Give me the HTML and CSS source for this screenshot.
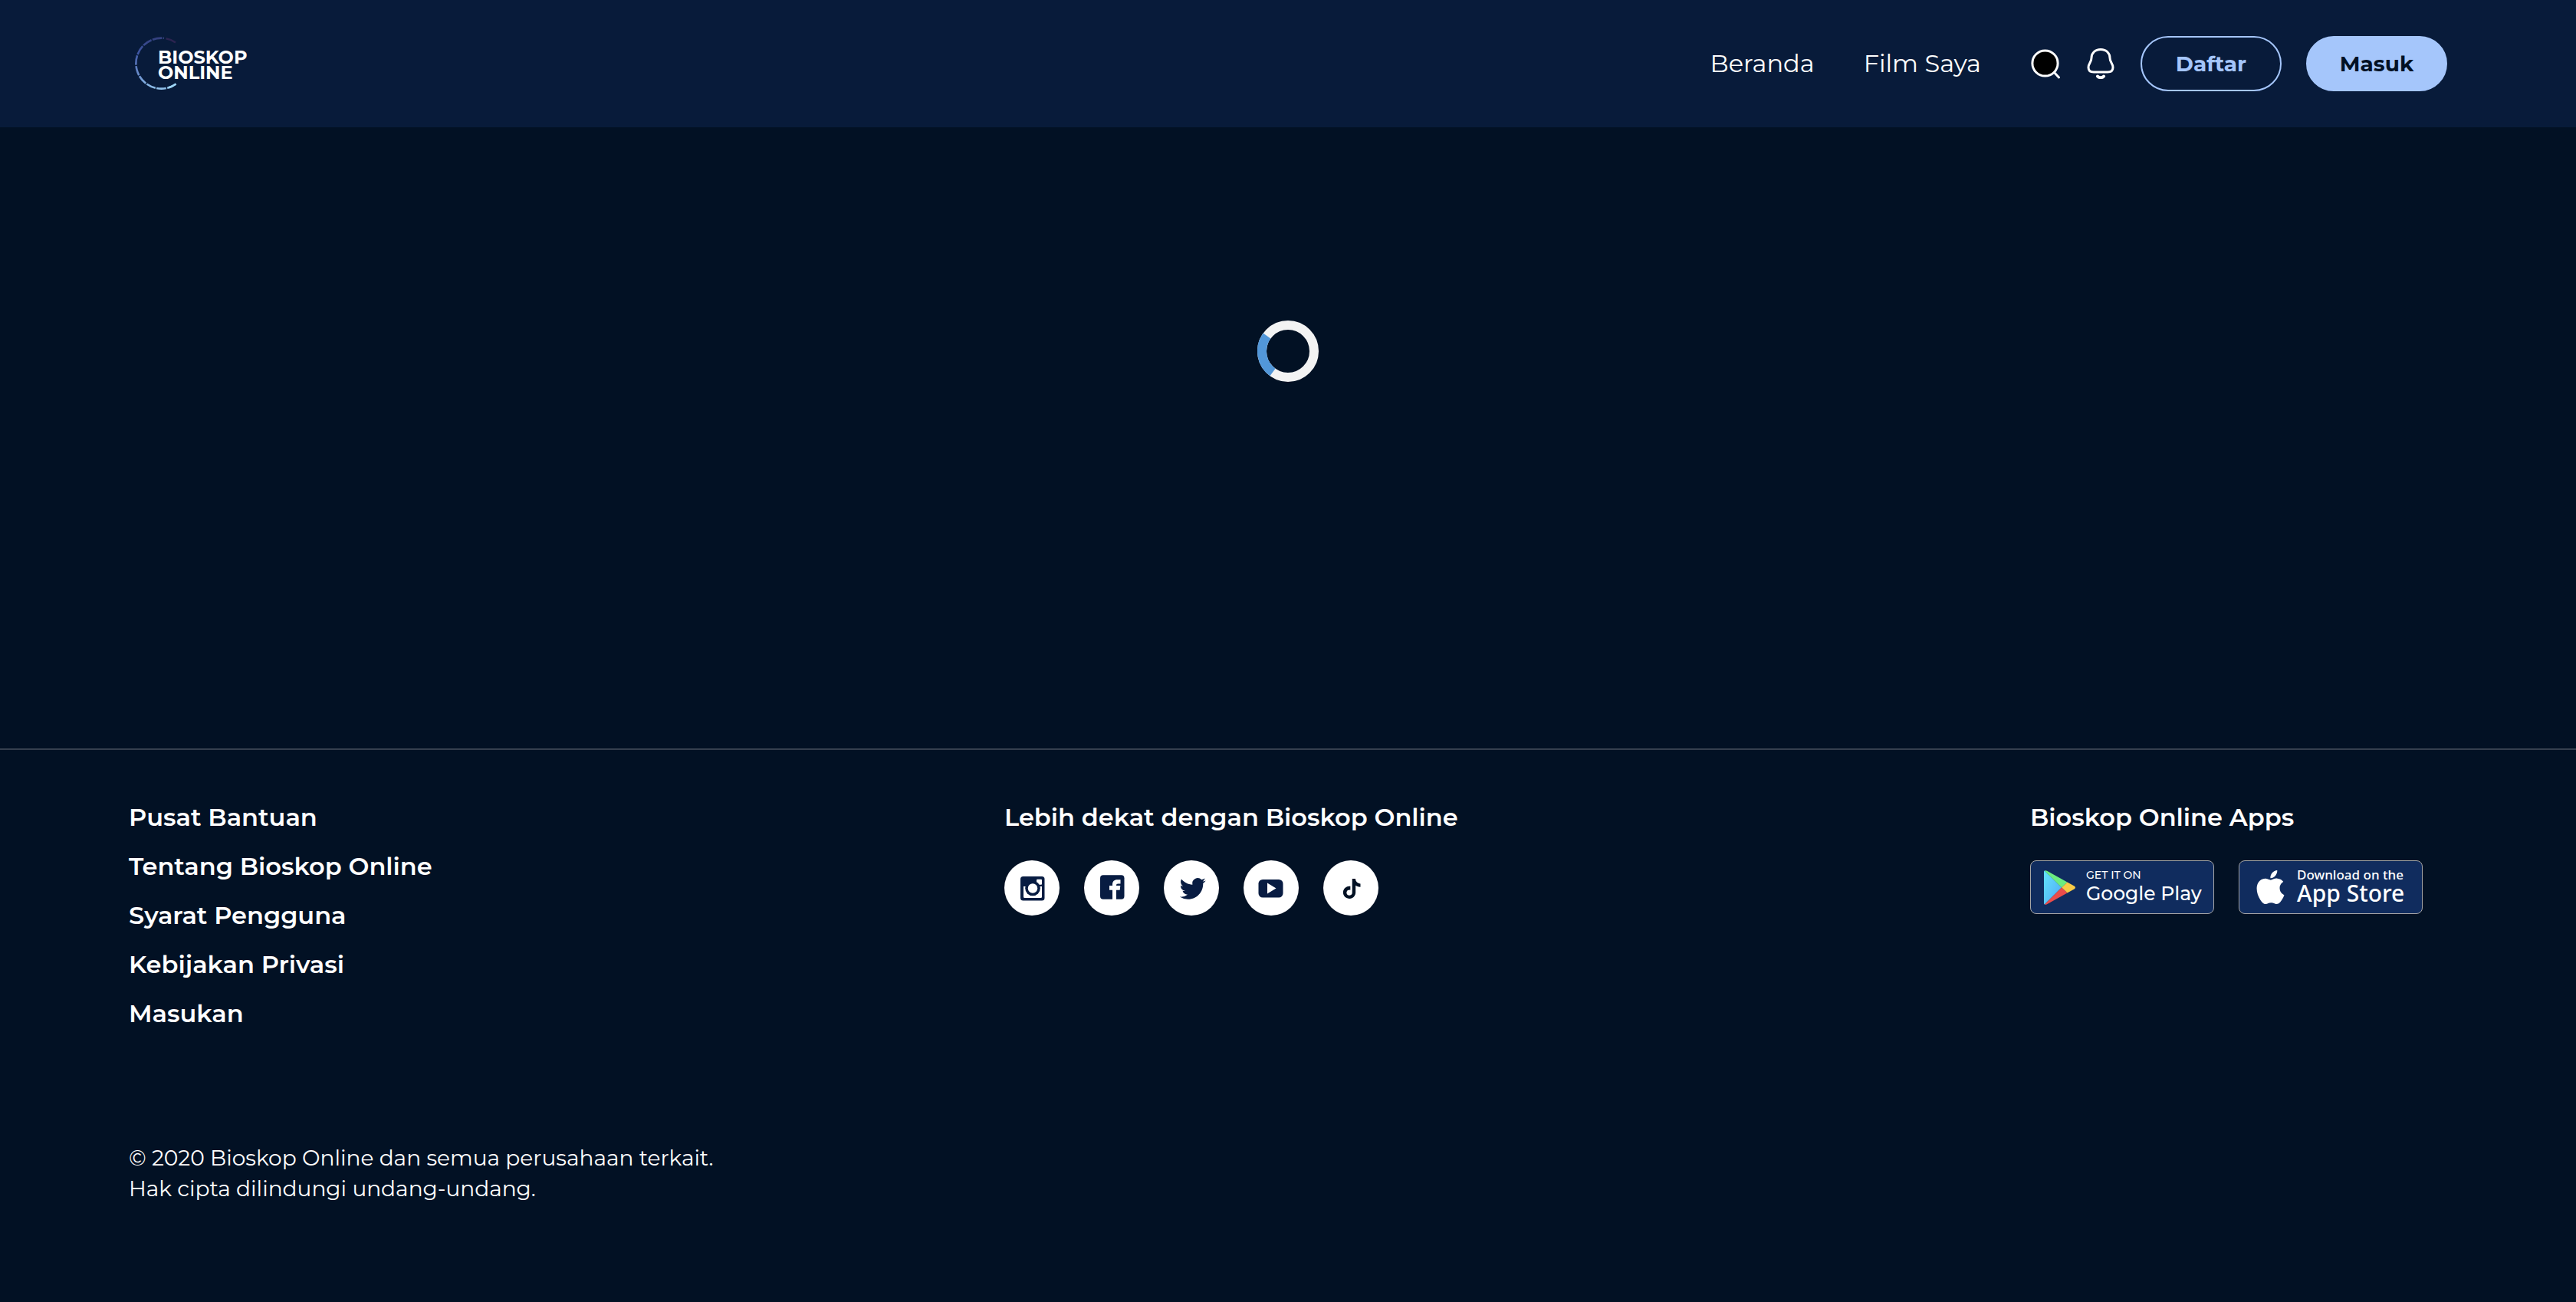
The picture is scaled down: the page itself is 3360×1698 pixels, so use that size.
FILE: index.html
```html
<!DOCTYPE html>
<html lang="id">
<head>
<meta charset="utf-8">
<title>Bioskop Online</title>
<meta name="viewport" content="width=device-width, initial-scale=1">
<link rel="stylesheet" href="styles.css">
</head>
<body>
<header class="header">
  <a class="logo" href="#" aria-label="Bioskop Online">
    <svg class="logo-ring" viewBox="0 0 70 70" fill="none" stroke-width="2.6" aria-hidden="true">
      <defs>
        <linearGradient id="ring" x1="0" y1="0" x2="0" y2="1">
          <stop offset="0" stop-color="#33407e"/>
          <stop offset=".3" stop-color="#3f57a4"/>
          <stop offset=".75" stop-color="#6e93d0"/>
          <stop offset="1" stop-color="#8fc0ea"/>
        </linearGradient>
      </defs>
      <path d="M53.500 61.500A33 33 0 1 1 38 1.800" stroke="url(#ring)" stroke-dasharray="12.600 1.400"/>
      <path d="M53.500 61.500A33 33 0 0 1 43.500 66.500" stroke="#9ed6f5"/>
      <path d="M40.500 2.300A33 33 0 0 1 53 7.500" stroke="#2c2450"/>
    </svg>
    <span class="logo-text">BIOSKOP<br>ONLINE</span>
  </a>
  <nav class="nav">
    <a class="nav-link" href="#">Beranda</a>
    <a class="nav-link" href="#">Film Saya</a>
    <div class="actions">
      <button class="icon-button" type="button" aria-label="Cari">
        <svg viewBox="0 0 40 40" stroke="#fff" stroke-width="3" aria-hidden="true">
          <circle cx="19.500" cy="19.500" r="16.600" fill="#000"/>
          <path d="M31.500 31.500l6 6.500" stroke-linecap="round"/>
        </svg>
      </button>
      <button class="icon-button" type="button" aria-label="Notifikasi">
        <svg viewBox="0 0 40 40" fill="none" stroke="#fff" stroke-width="3" stroke-linecap="round" aria-hidden="true">
          <path d="M20 1.500C12.500 1.500 8 6.500 8 12.500c0 6-4 7-4 12.500 0 4 2.500 6 7 6h18c4.500 0 7-2 7-6 0-5.500-4-6.500-4-12.500 0-6-4.500-11-12-11z"/>
          <path d="M16 36.500c2 2.300 6 2.300 8 0" stroke-width="4"/>
        </svg>
      </button>
      <button class="button button-outline" type="button">Daftar</button>
      <button class="button button-solid" type="button">Masuk</button>
    </div>
  </nav>
</header>

<main class="main">
  <div class="spinner" role="status" aria-label="Memuat">
    <svg viewBox="0 0 80 80" fill="none" stroke-width="12" aria-hidden="true">
      <circle cx="40" cy="40" r="34" stroke="#f3f3f3"/>
      <path d="M20 67.500A34 34 0 0 1 12.500 20" stroke="#5297d9"/>
    </svg>
  </div>
</main>

<footer class="footer">
  <div class="footer-columns">
    <ul class="links">
      <li><a href="#">Pusat Bantuan</a></li>
      <li><a href="#">Tentang Bioskop Online</a></li>
      <li><a href="#">Syarat Pengguna</a></li>
      <li><a href="#">Kebijakan Privasi</a></li>
      <li><a href="#">Masukan</a></li>
    </ul>

    <section>
      <h2 class="title">Lebih dekat dengan Bioskop Online</h2>
      <div class="socials">
        <a class="social" href="#" aria-label="Instagram">
          <svg viewBox="0 0 72 72" aria-hidden="true">
            <rect x="21" y="21" width="31.500" height="31.500" rx="3.500" fill="#081c42"/>
            <rect x="42" y="24.700" width="7" height="7" rx="1" fill="#fff"/>
            <path d="M25 34h24v13.500a1.500 1.500 0 0 1-1.500 1.500h-21a1.500 1.500 0 0 1-1.500-1.500z" fill="#fff"/>
            <circle cx="37" cy="36.500" r="9.800" fill="#081c42"/>
            <circle cx="37" cy="36.500" r="6.200" fill="#fff"/>
          </svg>
        </a>
        <a class="social" href="#" aria-label="Facebook">
          <svg viewBox="0 0 72 72" aria-hidden="true">
            <rect x="21" y="19.300" width="31.500" height="31.500" rx="4" fill="#081c42"/>
            <path d="M37 51V38.700h-4V33h4v-1.500c0-4 2.500-6.200 6-6.200h4.500v5.200h-3c-2 0-2.500.8-2.500 2.500h5.300l-.6 5.700H42V51z" fill="#fff"/>
          </svg>
        </a>
        <a class="social" href="#" aria-label="Twitter">
          <svg viewBox="0 0 72 72" aria-hidden="true">
            <path transform="translate(20.700 19.900) scale(1.417)" fill="#081c42" d="M23.953 4.57a10 10 0 01-2.825.775 4.958 4.958 0 002.163-2.723c-.951.555-2.005.959-3.127 1.184a4.92 4.92 0 00-8.384 4.482C7.69 8.095 4.067 6.13 1.64 3.162a4.822 4.822 0 00-.666 2.475c0 1.71.87 3.213 2.188 4.096a4.904 4.904 0 01-2.228-.616v.06a4.923 4.923 0 003.946 4.827 4.996 4.996 0 01-2.212.085 4.936 4.936 0 004.604 3.417 9.867 9.867 0 01-6.102 2.105c-.39 0-.779-.023-1.17-.067a13.995 13.995 0 007.557 2.209c9.053 0 13.998-7.496 13.998-13.985 0-.21 0-.42-.015-.63A9.935 9.935 0 0024 4.59z"/>
          </svg>
        </a>
        <a class="social" href="#" aria-label="YouTube">
          <svg viewBox="0 0 72 72" aria-hidden="true">
            <rect x="19.500" y="25" width="32" height="23.500" rx="5.500" fill="#081c42"/>
            <path d="M31 29.500v14l11.500-7z" fill="#fff"/>
          </svg>
        </a>
        <a class="social" href="#" aria-label="TikTok">
          <svg viewBox="0 0 72 72" aria-hidden="true">
            <path transform="translate(24.200 24) scale(1.083)" fill="#021124" d="M12.525.02c1.31-.02 2.61-.01 3.91-.02.08 1.53.63 3.09 1.75 4.17 1.12 1.11 2.7 1.62 4.24 1.79v4.03c-1.44-.05-2.89-.35-4.2-.97-.57-.26-1.1-.59-1.62-.93-.01 2.92.01 5.84-.02 8.75-.08 1.4-.54 2.79-1.35 3.94-1.31 1.92-3.58 3.17-5.91 3.21-1.43.08-2.86-.31-4.08-1.03-2.02-1.19-3.44-3.37-3.65-5.71-.02-.5-.03-1-.01-1.49.18-1.9 1.12-3.72 2.58-4.96 1.66-1.44 3.98-2.13 6.15-1.72.02 1.48-.04 2.96-.04 4.44-.99-.32-2.15-.23-3.02.37-.63.41-1.11 1.04-1.36 1.75-.21.51-.15 1.07-.14 1.61.24 1.64 1.82 3.02 3.5 2.87 1.12-.01 2.19-.66 2.77-1.61.19-.33.4-.67.41-1.06.1-1.79.06-3.57.07-5.36.01-4.03-.01-8.05.02-12.07z"/>
          </svg>
        </a>
      </div>
    </section>

    <section>
      <h2 class="title">Bioskop Online Apps</h2>
      <div class="badges">
        <a class="badge badge-google" href="#">
          <svg class="badge-icon" viewBox="0 0 41 45" aria-hidden="true">
            <defs>
              <linearGradient id="play" x1="0" y1="0" x2="1" y2="1">
                <stop offset="0" stop-color="#62e4fb"/>
                <stop offset="1" stop-color="#50a8f5"/>
              </linearGradient>
            </defs>
            <path d="M0 2Q0 .8.800.500L23 22.500.800 44.500Q0 44 0 43z" fill="url(#play)"/>
            <path d="M.8.500Q2-.3 4 .8L30.500 15.500 23 22.500z" fill="#6cec80"/>
            <path d="M30.500 15.500l9 5q3 2 0 4l-9 5-7.500-7z" fill="#f8cb46"/>
            <path d="M.8 44.500q1.200.8 3.200-.3L30.500 29.500l-7.500-7z" fill="#eb4d4b"/>
          </svg>
          <span class="badge-text">
            <span class="badge-small">GET IT ON</span>
            <span class="badge-large">Google Play</span>
          </span>
        </a>
        <a class="badge badge-apple" href="#">
          <svg class="badge-icon" viewBox="2 0 20 24" aria-hidden="true">
            <path fill="#fff" d="M12.152 6.896c-.948 0-2.415-1.078-3.96-1.04-2.04.027-3.91 1.183-4.961 3.014-2.117 3.675-.546 9.103 1.519 12.09 1.013 1.454 2.208 3.09 3.792 3.039 1.52-.065 2.09-.987 3.935-.987 1.831 0 2.35.987 3.96.948 1.637-.026 2.676-1.48 3.676-2.948 1.156-1.688 1.636-3.325 1.662-3.415-.039-.013-3.182-1.221-3.22-4.857-.026-3.04 2.48-4.494 2.597-4.559-1.429-2.09-3.623-2.324-4.39-2.376-2-.156-3.675 1.09-4.61 1.09zM15.53 3.83c.843-1.012 1.4-2.427 1.245-3.83-1.207.052-2.662.805-3.532 1.818-.78.896-1.454 2.338-1.273 3.714 1.338.104 2.715-.688 3.559-1.701"/>
          </svg>
          <span class="badge-text">
            <span class="badge-small">Download on the</span>
            <span class="badge-large">App Store</span>
          </span>
        </a>
      </div>
    </section>
  </div>
  <p class="copyright">© 2020 Bioskop Online dan semua perusahaan terkait.<br>Hak cipta dilindungi undang-undang.</p>
</footer>
</body>
</html>
```
FILE: styles.css
```css
* { box-sizing: border-box; }

body {
  margin: 0;
  background: #021124;
  color: #fff;
  font-family: Montserrat, Inter, sans-serif;
}

a { color: inherit; text-decoration: none; }
svg { display: block; width: 100%; height: 100%; }
button { cursor: pointer; font-family: inherit; }

/* Header */
.header {
  display: flex;
  flex-wrap: wrap;
  align-items: center;
  justify-content: space-between;
  gap: 32px;
  padding: 47px 168px;
  background: #081b3a;
}

.logo { display: flex; align-items: center; padding-left: 8px; }
.logo-ring { width: 70px; height: 70px; }
.logo-text {
  margin-left: -40px;
  padding-top: 4px;
  font-size: 24px;
  font-weight: 700;
  line-height: 20px;
}

.nav { display: flex; flex-wrap: wrap; align-items: center; gap: 64px; }
.nav-link { font-size: 32px; line-height: 40px; }
.actions { display: flex; align-items: center; gap: 32px; }
.icon-button { width: 40px; height: 40px; padding: 0; border: 0; background: none; }
.button {
  width: 184px;
  height: 72px;
  padding: 0;
  border: 2px solid #a5c6fb;
  border-radius: 36px;
  font-size: 28px;
  font-weight: 700;
}
.button-outline { background: none; color: #a5c6fb; }
.button-solid { background: #a5c6fb; color: #021124; }

/* Loading state */
.main { padding: 252px 0 478px; }
.spinner { width: 80px; height: 80px; margin: 0 auto; }

/* Footer */
.footer { padding: 64px 168px 128px; border-top: 2px solid #353f4e; }
.footer-columns { display: flex; flex-wrap: wrap; justify-content: space-between; }
.links,
.title { margin: 0; font-size: 32px; font-weight: 600; line-height: 48px; }
.links { padding: 0; list-style: none; }
.links li { margin-bottom: 16px; }

.socials { display: flex; gap: 32px; margin-top: 32px; }
.social { width: 72px; height: 72px; border-radius: 50%; background: #fff; }

.badges { display: flex; margin-top: 32px; }
.badge {
  display: flex;
  align-items: center;
  width: 240px;
  height: 70px;
  margin-right: 32px;
  border: 1px solid #a6a6a6;
  border-radius: 8px;
  background: #102c5e;
  white-space: nowrap;
}
.badge-text,
.badge-small,
.badge-large { display: block; }
.badge-small { line-height: 16px; }
.badge-large { line-height: 32px; }

.badge-google { gap: 14px; padding-left: 17px; }
.badge-google .badge-icon { width: 41px; height: 45px; }
.badge-google .badge-small { font-size: 14px; font-weight: 500; }
.badge-google .badge-large { font-size: 25px; font-weight: 500; }

.badge-apple { gap: 16px; padding-left: 22px; font-family: "Noto Sans", "Open Sans", sans-serif; }
.badge-apple .badge-icon { width: 37px; height: 44px; }
.badge-apple .badge-small { font-size: 17px; font-weight: 500; }
.badge-apple .badge-large { font-size: 30px; font-weight: 500; }

.copyright { margin: 128px 0 0; font-size: 28px; line-height: 40px; }
```
